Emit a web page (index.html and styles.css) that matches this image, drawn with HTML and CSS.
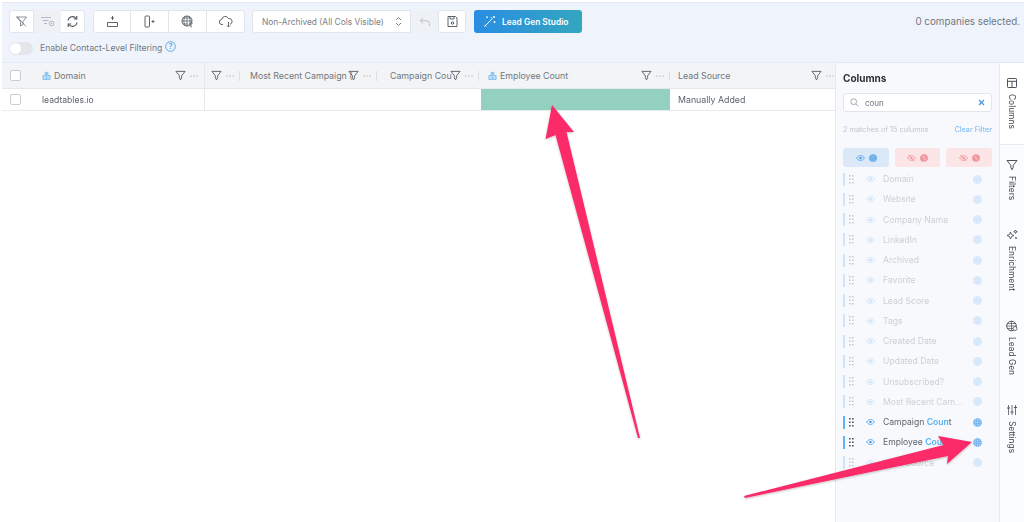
FILE: index.html
```html
<!DOCTYPE html>
<html lang="en">
<head>
<meta charset="utf-8">
<title>Companies</title>
<link rel="stylesheet" href="styles.css">
</head>
<body>
<svg class="defs" width="0" height="0" aria-hidden="true">
  <symbol id="funnel" viewBox="0 0 12 12"><path d="M1 1.500h10L7.200 6.300v2.200L6 10.800 4.800 8.500V6.300z" fill="none" stroke="currentColor" stroke-width="1"/></symbol>
  <symbol id="dots" viewBox="0 0 8 2"><circle cx="1" cy="1" r=".6" fill="currentColor"/><circle cx="4" cy="1" r=".6" fill="currentColor"/><circle cx="7" cy="1" r=".6" fill="currentColor"/></symbol>
  <symbol id="building" viewBox="0 0 10 10"><path d="M1 9.500V5h2.500V1.500h3V5H9v4.500z" fill="#bcdcf6" stroke="#6fb2ea" stroke-width=".8"/><path d="M5 2v7.500" stroke="#6fb2ea" stroke-width=".7"/></symbol>
  <symbol id="eye" viewBox="0 0 12 8"><path d="M.8 4C2.200 1.800 4 .8 6 .8s3.800 1 5.200 3.200C9.800 6.200 8 7.200 6 7.200S2.200 6.200.8 4z" fill="none" stroke="currentColor" stroke-width="1.100"/><circle cx="6" cy="4" r="1.700" fill="currentColor"/></symbol>
  <symbol id="eyeoff" viewBox="0 0 12 10"><path d="M.8 5C2.200 2.800 4 1.800 6 1.800s3.800 1 5.200 3.200C9.800 7.200 8 8.200 6 8.200S2.200 7.200.8 5z" fill="none" stroke="currentColor" stroke-width="1"/><circle cx="6" cy="5" r="1.500" fill="currentColor"/><path d="M2 .8l8 8.400" stroke="currentColor" stroke-width="1.100"/></symbol>
  <symbol id="globe" viewBox="0 0 10 10"><circle cx="5" cy="5" r="4.800" fill="currentColor"/><path d="M.6 5h8.800M5 .6v8.800M1.800 2.500h6.400M1.800 7.500h6.400M3.200 1c-1.200 2.600-1.200 5.400 0 8M6.800 1c1.200 2.600 1.200 5.400 0 8" stroke="#fff" stroke-opacity=".6" stroke-width=".5" fill="none"/></symbol>
  <symbol id="globeoff" viewBox="0 0 10 10"><circle cx="5" cy="5" r="4.800" fill="currentColor"/><path d="M.6 5h8.800M5 .6v8.800M1.800 2.500h6.400M1.800 7.500h6.400" stroke="#fff" stroke-opacity=".6" stroke-width=".5" fill="none"/><path d="M1.500 1.500l7 7" stroke="#fff" stroke-opacity=".7" stroke-width=".7"/></symbol>
  <symbol id="drag" viewBox="0 0 5 9"><g fill="currentColor"><rect x="0" y="0" width="1.600" height="1.500"/><rect x="3" y="0" width="1.600" height="1.500"/><rect x="0" y="3.500" width="1.600" height="1.500"/><rect x="3" y="3.500" width="1.600" height="1.500"/><rect x="0" y="7" width="1.600" height="1.500"/><rect x="3" y="7" width="1.600" height="1.500"/></g></symbol>
</svg>

<div class="app">
  <header class="toolbar">
    <div class="tool-row">
      <div class="btn-group">
        <button class="tool w25"><svg width="13" height="13" viewBox="0 0 13 13"><path d="M1.500 2h10L8 6.500v3L5.500 11V6.500z M2 1.500l9 10" fill="none" stroke="#70767f" stroke-width=".8"/></svg></button>
        <button class="tool w27 off"><svg width="15" height="11" viewBox="0 0 15 11"><path d="M1 1.500h10M2.500 4.500h6M4 7.500h3" stroke="#b4bac2" fill="none"/><circle cx="11.500" cy="7.500" r="2.300" fill="none" stroke="#b4bac2"/><circle cx="11.500" cy="7.500" r=".8" fill="#b4bac2"/></svg></button>
        <button class="tool w24"><svg width="13" height="13" viewBox="0 0 13 13"><path d="M2 5.500A4.600 4.600 0 0 1 10.200 3.500M11 7.500A4.600 4.600 0 0 1 2.800 9.500" fill="none" stroke="#4c535c" stroke-width="1.100"/><path d="M10.800 1v3h-3M2.200 12V9h3" fill="none" stroke="#4c535c" stroke-width="1.100"/></svg></button>
      </div>
      <div class="btn-group">
        <button class="tool w38"><svg width="13" height="13" viewBox="0 0 13 13"><path d="M1.500 7.500h10v4h-10z" fill="none" stroke="#4c535c" stroke-width=".9"/><path d="M6.500 1v4M4.800 3h3.400" stroke="#4c535c" stroke-width=".9"/></svg></button>
        <button class="tool w38"><svg width="13" height="13" viewBox="0 0 13 13"><rect x="2" y="1" width="4.500" height="11" rx="1" fill="none" stroke="#4c535c" stroke-width=".9"/><path d="M8.500 6.500h3M10 5v3" stroke="#4c535c" stroke-width=".9"/></svg></button>
        <button class="tool w38"><svg width="13" height="13" viewBox="0 0 13 13"><circle cx="6" cy="6" r="5" fill="none" stroke="#4c535c" stroke-width=".9"/><path d="M1 6h10M6 1v10M2 3h8M2 9h5M4 1.500c-1.500 3-1.500 6 0 9M8 1.500c1.500 3 1.500 6 0 9" fill="none" stroke="#4c535c" stroke-width=".7"/><path d="M10 7.500v5M8.500 9L10 7.500 11.500 9" fill="#fff" stroke="#4c535c" stroke-width=".9"/></svg></button>
        <button class="tool w38"><svg width="14" height="13" viewBox="0 0 14 13"><path d="M4 9.500H3a2.500 2.500 0 0 1-.3-5A3.600 3.600 0 0 1 9.500 3.500 3 3 0 0 1 11 9.300" fill="none" stroke="#4c535c" stroke-width=".9"/><path d="M9.500 7v5M8 10.500l1.500 1.500 1.500-1.500" fill="none" stroke="#4c535c" stroke-width=".9"/></svg></button>
      </div>
      <div class="select">
        <span>Non-Archived (All Cols Visible)</span>
        <svg width="7" height="11" viewBox="0 0 7 11"><path d="M1 4l2.500-2.500L6 4M1 7l2.500 2.500L6 7" fill="none" stroke="#7d848d"/></svg>
      </div>
      <button class="tool w27 off flat"><svg width="12" height="10" viewBox="0 0 12 10"><path d="M4 1L1.200 3.700 4 6.400M1.500 3.700h6a3 3 0 0 1 3 3V9" fill="none" stroke="#bcc2ca"/></svg></button>
      <button class="tool w28 single"><svg width="13" height="13" viewBox="0 0 13 13"><path d="M2 1.500h7.500l1.500 1.500v8.500H2zM4 1.500v2.500h4V1.500" fill="none" stroke="#4c535c" stroke-width=".9"/><circle cx="6.500" cy="8" r="1.200" fill="none" stroke="#4c535c"/></svg></button>
      <button class="cta"><svg width="13" height="13" viewBox="0 0 13 13"><path d="M1.500 11.500L9.500 3.500M1.500 9.800l1.700 1.700M8 2l.5 1M11 1v2M10 2h2M11.500 6v2M10.500 7h2M4 1.500v1.500M3.300 2.200h1.500" stroke="#fff" fill="none"/></svg><span>Lead Gen Studio</span></button>
      <div class="selected">0 companies selected.</div>
    </div>
    <div class="contact-row">
      <span class="toggle"><i></i></span>
      <span class="contact-label">Enable Contact-Level Filtering</span>
      <svg class="help" width="11" height="11" viewBox="0 0 11 11"><circle cx="5.500" cy="5.500" r="4.800" fill="none" stroke="#4f9fe8" stroke-width=".9"/><text x="5.500" y="8" text-anchor="middle" class="help-q">?</text></svg>
    </div>
  </header>

  <div class="workspace">
    <main class="table">
      <div class="grid head">
        <div class="cell"><span class="check"></span></div>
        <div class="cell domain">
          <svg class="bld" width="9" height="9"><use href="#building"/></svg><span class="title">Domain</span>
          <span class="spacer"></span>
          <svg class="fn" width="11" height="11"><use href="#funnel"/></svg><svg class="dt" width="8" height="2"><use href="#dots"/></svg>
        </div>
        <div class="cell mini">
          <svg class="fn" width="11" height="11"><use href="#funnel"/></svg><svg class="dt" width="8" height="2"><use href="#dots"/></svg>
        </div>
        <div class="cell col"><span class="title w98">Most Recent Campaign (</span><svg class="fn" width="11" height="11"><use href="#funnel"/></svg><svg class="dt" width="8" height="2"><use href="#dots"/></svg></div>
        <div class="cell col"><span class="title w61">Campaign Cou</span><svg class="fn" width="11" height="11"><use href="#funnel"/></svg><svg class="dt" width="8" height="2"><use href="#dots"/></svg></div>
        <div class="cell col emp"><svg class="bld" width="9" height="9"><use href="#building"/></svg><span class="title">Employee Count</span><span class="spacer"></span><svg class="fn" width="11" height="11"><use href="#funnel"/></svg><svg class="dt" width="8" height="2"><use href="#dots"/></svg></div>
        <div class="cell col last"><span class="title">Lead Source</span><span class="spacer"></span><svg class="fn" width="11" height="11"><use href="#funnel"/></svg><svg class="dt" width="8" height="2"><use href="#dots"/></svg></div>
      </div>
      <div class="grid row">
        <div class="cell"><span class="check"></span></div>
        <div class="cell domain-val">leadtables.io</div>
        <div class="cell blank"></div>
        <div class="cell hl"></div>
        <div class="cell source">Manually Added</div>
      </div>
    </main>

    <aside class="panel">
      <h2 class="panel-title">Columns</h2>
      <div class="search">
        <svg width="9" height="9" viewBox="0 0 9 9"><circle cx="3.700" cy="3.700" r="2.900" fill="none" stroke="#9aa2ac" stroke-width=".9"/><path d="M6 6l2.500 2.500" stroke="#9aa2ac" stroke-width=".9"/></svg>
        <span class="query">coun</span>
        <svg class="clear" width="7" height="7" viewBox="0 0 7 7"><path d="M1 1l5 5M6 1L1 6" stroke="#3f97e6" stroke-width="1.200"/></svg>
      </div>
      <div class="matches"><span>2 matches of 15 columns</span><span class="clear-filter">Clear Filter</span></div>
      <div class="pills">
        <div class="pill blue"><svg width="9" height="6"><use href="#eye"/></svg><svg width="8" height="8"><use href="#globe"/></svg></div>
        <div class="pill pink"><svg width="9" height="8"><use href="#eyeoff"/></svg><svg width="8" height="8"><use href="#globeoff"/></svg></div>
        <div class="pill pink"><svg width="9" height="8"><use href="#eyeoff"/></svg><svg width="8" height="8"><use href="#globeoff"/></svg></div>
      </div>
      <ul class="cols">
        <li class="faded"><i class="bar"></i><svg class="drag" width="5" height="9"><use href="#drag"/></svg><svg class="eye" width="9" height="6"><use href="#eye"/></svg><span class="name">Domain</span><svg class="gl" width="9" height="9"><use href="#globe"/></svg></li>
        <li class="faded"><i class="bar"></i><svg class="drag" width="5" height="9"><use href="#drag"/></svg><svg class="eye" width="9" height="6"><use href="#eye"/></svg><span class="name">Website</span><svg class="gl" width="9" height="9"><use href="#globe"/></svg></li>
        <li class="faded"><i class="bar"></i><svg class="drag" width="5" height="9"><use href="#drag"/></svg><svg class="eye" width="9" height="6"><use href="#eye"/></svg><span class="name">Company Name</span><svg class="gl" width="9" height="9"><use href="#globe"/></svg></li>
        <li class="faded"><i class="bar"></i><svg class="drag" width="5" height="9"><use href="#drag"/></svg><svg class="eye" width="9" height="6"><use href="#eye"/></svg><span class="name">LinkedIn</span><svg class="gl" width="9" height="9"><use href="#globe"/></svg></li>
        <li class="faded"><i class="bar"></i><svg class="drag" width="5" height="9"><use href="#drag"/></svg><svg class="eye" width="9" height="6"><use href="#eye"/></svg><span class="name">Archived</span><svg class="gl" width="9" height="9"><use href="#globe"/></svg></li>
        <li class="faded"><i class="bar"></i><svg class="drag" width="5" height="9"><use href="#drag"/></svg><svg class="eye" width="9" height="6"><use href="#eye"/></svg><span class="name">Favorite</span><svg class="gl" width="9" height="9"><use href="#globe"/></svg></li>
        <li class="faded"><i class="bar"></i><svg class="drag" width="5" height="9"><use href="#drag"/></svg><svg class="eye" width="9" height="6"><use href="#eye"/></svg><span class="name">Lead Score</span><svg class="gl" width="9" height="9"><use href="#globe"/></svg></li>
        <li class="faded"><i class="bar"></i><svg class="drag" width="5" height="9"><use href="#drag"/></svg><svg class="eye" width="9" height="6"><use href="#eye"/></svg><span class="name">Tags</span><svg class="gl" width="9" height="9"><use href="#globe"/></svg></li>
        <li class="faded"><i class="bar"></i><svg class="drag" width="5" height="9"><use href="#drag"/></svg><svg class="eye" width="9" height="6"><use href="#eye"/></svg><span class="name">Created Date</span><svg class="gl" width="9" height="9"><use href="#globe"/></svg></li>
        <li class="faded"><i class="bar"></i><svg class="drag" width="5" height="9"><use href="#drag"/></svg><svg class="eye" width="9" height="6"><use href="#eye"/></svg><span class="name">Updated Date</span><svg class="gl" width="9" height="9"><use href="#globe"/></svg></li>
        <li class="faded"><i class="bar"></i><svg class="drag" width="5" height="9"><use href="#drag"/></svg><svg class="eye" width="9" height="6"><use href="#eye"/></svg><span class="name">Unsubscribed?</span><svg class="gl" width="9" height="9"><use href="#globe"/></svg></li>
        <li class="faded"><i class="bar"></i><svg class="drag" width="5" height="9"><use href="#drag"/></svg><svg class="eye" width="9" height="6"><use href="#eye"/></svg><span class="name">Most Recent Cam...</span><svg class="gl" width="9" height="9"><use href="#globe"/></svg></li>
        <li><i class="bar"></i><svg class="drag" width="5" height="9"><use href="#drag"/></svg><svg class="eye" width="9" height="6"><use href="#eye"/></svg><span class="name">Campaign <b>Coun</b>t</span><svg class="gl" width="9" height="9"><use href="#globe"/></svg></li>
        <li><i class="bar"></i><svg class="drag" width="5" height="9"><use href="#drag"/></svg><svg class="eye" width="9" height="6"><use href="#eye"/></svg><span class="name">Employee <b>Coun</b>t</span><svg class="gl" width="9" height="9"><use href="#globe"/></svg></li>
        <li class="faded"><i class="bar"></i><svg class="drag" width="5" height="9"><use href="#drag"/></svg><svg class="eye" width="9" height="6"><use href="#eye"/></svg><span class="name">Lead Source</span><svg class="gl" width="9" height="9"><use href="#globe"/></svg></li>
      </ul>
    </aside>

    <nav class="tabs">
      <div class="tab active"><svg width="12" height="12" viewBox="0 0 12 12"><rect x="1.500" y="1.500" width="9" height="9" rx=".8" fill="none" stroke="#4c535c"/><path d="M1.500 4.300h9M6 4.300v6.200" stroke="#4c535c"/></svg><span>Columns</span></div>
      <div class="tab"><svg width="12" height="12" viewBox="0 0 12 12"><path d="M1 1.500h10L7.200 6.300v2.200L6 10.800 4.800 8.500V6.300z" fill="none" stroke="#4c535c"/></svg><span>Filters</span></div>
      <div class="tab"><svg width="12" height="12" viewBox="0 0 12 12"><path d="M4.500 3l1 2.500 2.500 1-2.500 1-1 2.500-1-2.500-2.500-1 2.500-1zM9.500 1l.5 1.200 1.200.5-1.200.5-.5 1.200-.5-1.200-1.200-.5 1.200-.5z" fill="none" stroke="#4c535c" stroke-width=".9"/><circle cx="10" cy="9" r=".9" fill="#4c535c"/></svg><span>Enrichment</span></div>
      <div class="tab"><svg width="12" height="12" viewBox="0 0 12 12"><circle cx="5.500" cy="6" r="4.800" fill="none" stroke="#4c535c"/><path d="M.8 6h9.400M5.500 1.200v9.600M1.500 3.500h8M1.500 8.500h8" fill="none" stroke="#4c535c" stroke-width=".7"/><circle cx="9" cy="8.500" r="2" fill="#fff" stroke="#4c535c" stroke-width=".8"/></svg><span>Lead Gen</span></div>
      <div class="tab"><svg width="12" height="12" viewBox="0 0 12 12"><path d="M2.500 1v10M6 1v10M9.500 1v10" stroke="#4c535c" stroke-width=".8"/><path d="M1 4h3M4.500 8h3M8 3.500h3" stroke="#4c535c"/></svg><span>Settings</span></div>
    </nav>
  </div>

  <svg class="arrows" width="1024" height="522" viewBox="0 0 1024 522">
    <defs><filter id="sh" x="-20%" y="-20%" width="140%" height="140%"><feDropShadow dx="0" dy="1" stdDeviation="1" flood-color="#000" flood-opacity=".25"/></filter></defs>
    <path filter="url(#sh)" fill="#fb2a68" d="M552 105L574 132L566.500 132L640 438L638 438L555.500 135L545.500 139Z"/>
    <path filter="url(#sh)" fill="#fb2a68" d="M972 442L947 464L948 456L745 498L744 496L943.500 445L938 436Z"/>
  </svg>
</div>
</body>
</html>
```

FILE: styles.css
```css
* { box-sizing: border-box; }
html, body { margin: 0; padding: 0; }
body {
  width: 1024px;
  height: 522px;
  overflow: hidden;
  background: #fff;
  font-family: Inter, "Noto Sans", sans-serif;
  font-size: 9px;
  color: #5c636c;
}
.defs { position: absolute; }
.app {
  position: relative;
  width: 1024px;
  height: 522px;
  padding: 2px 0 0 2px;
  display: flex;
  flex-direction: column;
  filter: blur(.35px);
}
button { font: inherit; padding: 0; margin: 0; cursor: pointer; }

.toolbar {
  height: 61px;
  background: #eff4fc;
  border-top: 1px solid #e5eaf2;
  border-bottom: 1px solid #e1e9f5;
  padding: 7px 4px 0 7px;
}
.tool-row { display: flex; align-items: center; height: 23px; }
.btn-group { display: flex; margin-right: 8px; }
.tool {
  height: 23px;
  display: flex;
  align-items: center;
  justify-content: center;
  background: #fff;
  border: 1px solid #e2e6ec;
  border-left-width: 0;
}
.btn-group .tool:first-child { border-left-width: 1px; border-radius: 3px 0 0 3px; }
.btn-group .tool:last-child { border-radius: 0 3px 3px 0; }
.tool.off { background: #eef1f5; border-color: #eef1f5; }
.tool.flat { border: 0; }
.tool.single { border-left-width: 1px; border-radius: 3px; }
.w24 { width: 24px; }
.w25 { width: 25px; }
.w27 { width: 27px; }
.w28 { width: 28px; }
.w38 { width: 38px; }
.select {
  width: 159px;
  height: 23px;
  margin-left: -1px;
  padding: 0 8px 0 9px;
  display: flex;
  align-items: center;
  justify-content: space-between;
  background: #fff;
  border: 1px solid #e2e6ec;
  border-radius: 3px 0 0 3px;
  color: #7a8089;
  font-size: 8.4px;
}
.cta {
  width: 108px;
  height: 23px;
  margin-left: 8px;
  display: flex;
  align-items: center;
  gap: 6px;
  padding-left: 9px;
  border: 0;
  border-radius: 3px;
  background: linear-gradient(90deg, #2a8de3, #33a6bf);
  color: #fff;
  font-weight: 600;
  font-size: 8.4px;
}
.selected { margin-left: auto; font-size: 9.8px; color: #72787f; }

.contact-row { display: flex; align-items: flex-start; margin-top: 9px; }
.toggle {
  width: 24px;
  height: 13px;
  border-radius: 7px;
  background: #e3e6ea;
  padding: 1px;
  margin-right: 7px;
}
.toggle i { display: block; width: 11px; height: 11px; border-radius: 50%; background: #fff; }
.contact-label { font-size: 8.6px; line-height: 13px; color: #71777f; }
.help { margin: -1px 0 0 3px; }
.help-q { font-size: 7.500px; fill: #4f9fe8; font-weight: 500; }

.workspace { flex: 1; display: flex; min-height: 0; }
.table { width: 833px; }
.grid {
  display: grid;
  grid-template-columns: 31px 172px 34px 140px 101px 190px 165px;
}
.head {
  height: 26px;
  background: #f3f4f6;
  border-bottom: 1px solid #e5e7eb;
  color: #71777f;
}
.cell { display: flex; align-items: center; min-width: 0; }
.check {
  width: 11px;
  height: 11px;
  margin-left: 8px;
  background: #fff;
  border: 1px solid #c9cdd3;
  border-radius: 2px;
}
.domain { padding: 0 6px 0 9px; border-right: 1px solid #e5e7eb; }
.mini { padding-left: 6px; }
.bld { margin-right: 3px; flex: none; }
.title { font-size: 8.8px; white-space: nowrap; }
.spacer { flex: 1; }
.fn { color: #565d66; flex: none; }
.dt { color: #8a9098; margin-left: 4px; flex: none; }
.col { padding-left: 11px; }
.w98 { width: 98px; flex: none; }
.w61 { width: 60px; flex: none; }
.mini::after, .col::after {
  content: "";
  width: 1px;
  height: 10px;
  background: #dcdfe4;
  margin-left: 5px;
  flex: none;
}
.emp { padding-left: 8px; }
.last { padding: 0 1px 0 8px; }
.last::after { display: none; }

.row {
  height: 22px;
  grid-template-columns: 31px 172px 276px 189px 165px;
  border-bottom: 1px solid #e8eaee;
  color: #5c636c;
}
.domain-val { padding-left: 9px; font-size: 8.6px; border-right: 1px solid #e5e7eb; }
.hl { background: #93d0c0; }
.source { padding-left: 8px; font-size: 8.8px; }

.panel {
  width: 164px;
  background: #f7f9fc;
  border-left: 1px solid #e6e9ef;
  padding: 9px 7px 0 7px;
}
.panel-title {
  margin: 0;
  font-size: 10px;
  line-height: 12px;
  font-weight: 700;
  color: #2c3036;
}
.search {
  height: 19px;
  margin-top: 9px;
  display: flex;
  align-items: center;
  padding: 0 6px;
  background: #fff;
  border: 1px solid #e2e6ec;
  border-radius: 3px;
}
.query { margin-left: 6px; font-size: 8px; color: #6d747c; }
.clear { margin-left: auto; }
.matches {
  margin-top: 13px;
  display: flex;
  justify-content: space-between;
  font-size: 7.300px;
  line-height: 10px;
  color: #c0c6ce;
}
.clear-filter { color: #79b5ef; }
.pills { display: grid; grid-template-columns: 46px 45px 46px; gap: 6px; margin-top: 13px; }
.pill {
  height: 19px;
  display: flex;
  align-items: center;
  justify-content: center;
  gap: 4px;
  border-radius: 3px;
}
.pill.blue { background: #dbe8f8; color: #4a9fea; }
.pill.pink { background: #fbe5e7; color: #f0888f; }
.cols { list-style: none; margin: 2px 0 0; padding: 0; }
.cols li {
  height: 20.250px;
  display: flex;
  align-items: center;
  color: #5c636c;
}
.cols li.faded { opacity: .28; }
.bar { width: 2px; height: 13px; background: #5fb4f5; flex: none; }
.drag { margin-left: 4px; color: #4c535c; flex: none; }
.eye { margin-left: 12px; color: #4a9fea; flex: none; }
.name { margin-left: 8px; font-size: 8.600px; white-space: nowrap; }
.name b { color: #55b0f5; font-weight: 600; }
.gl { margin-left: auto; margin-right: 10px; color: #6aaef0; flex: none; }

.tabs { width: 25px; border-left: 1px solid #e6e9ef; background: #fbfcfd; }
.tab {
  display: flex;
  flex-direction: column;
  align-items: center;
  gap: 5px;
  padding: 14px 0 15px;
  color: #3f454d;
  font-size: 8.400px;
}
.tab.active { background: #fff; border-bottom: 1px solid #e6e9ef; }
.tab span { writing-mode: vertical-rl; line-height: 12px; }
.arrows { position: absolute; left: 0; top: 0; pointer-events: none; }
```
